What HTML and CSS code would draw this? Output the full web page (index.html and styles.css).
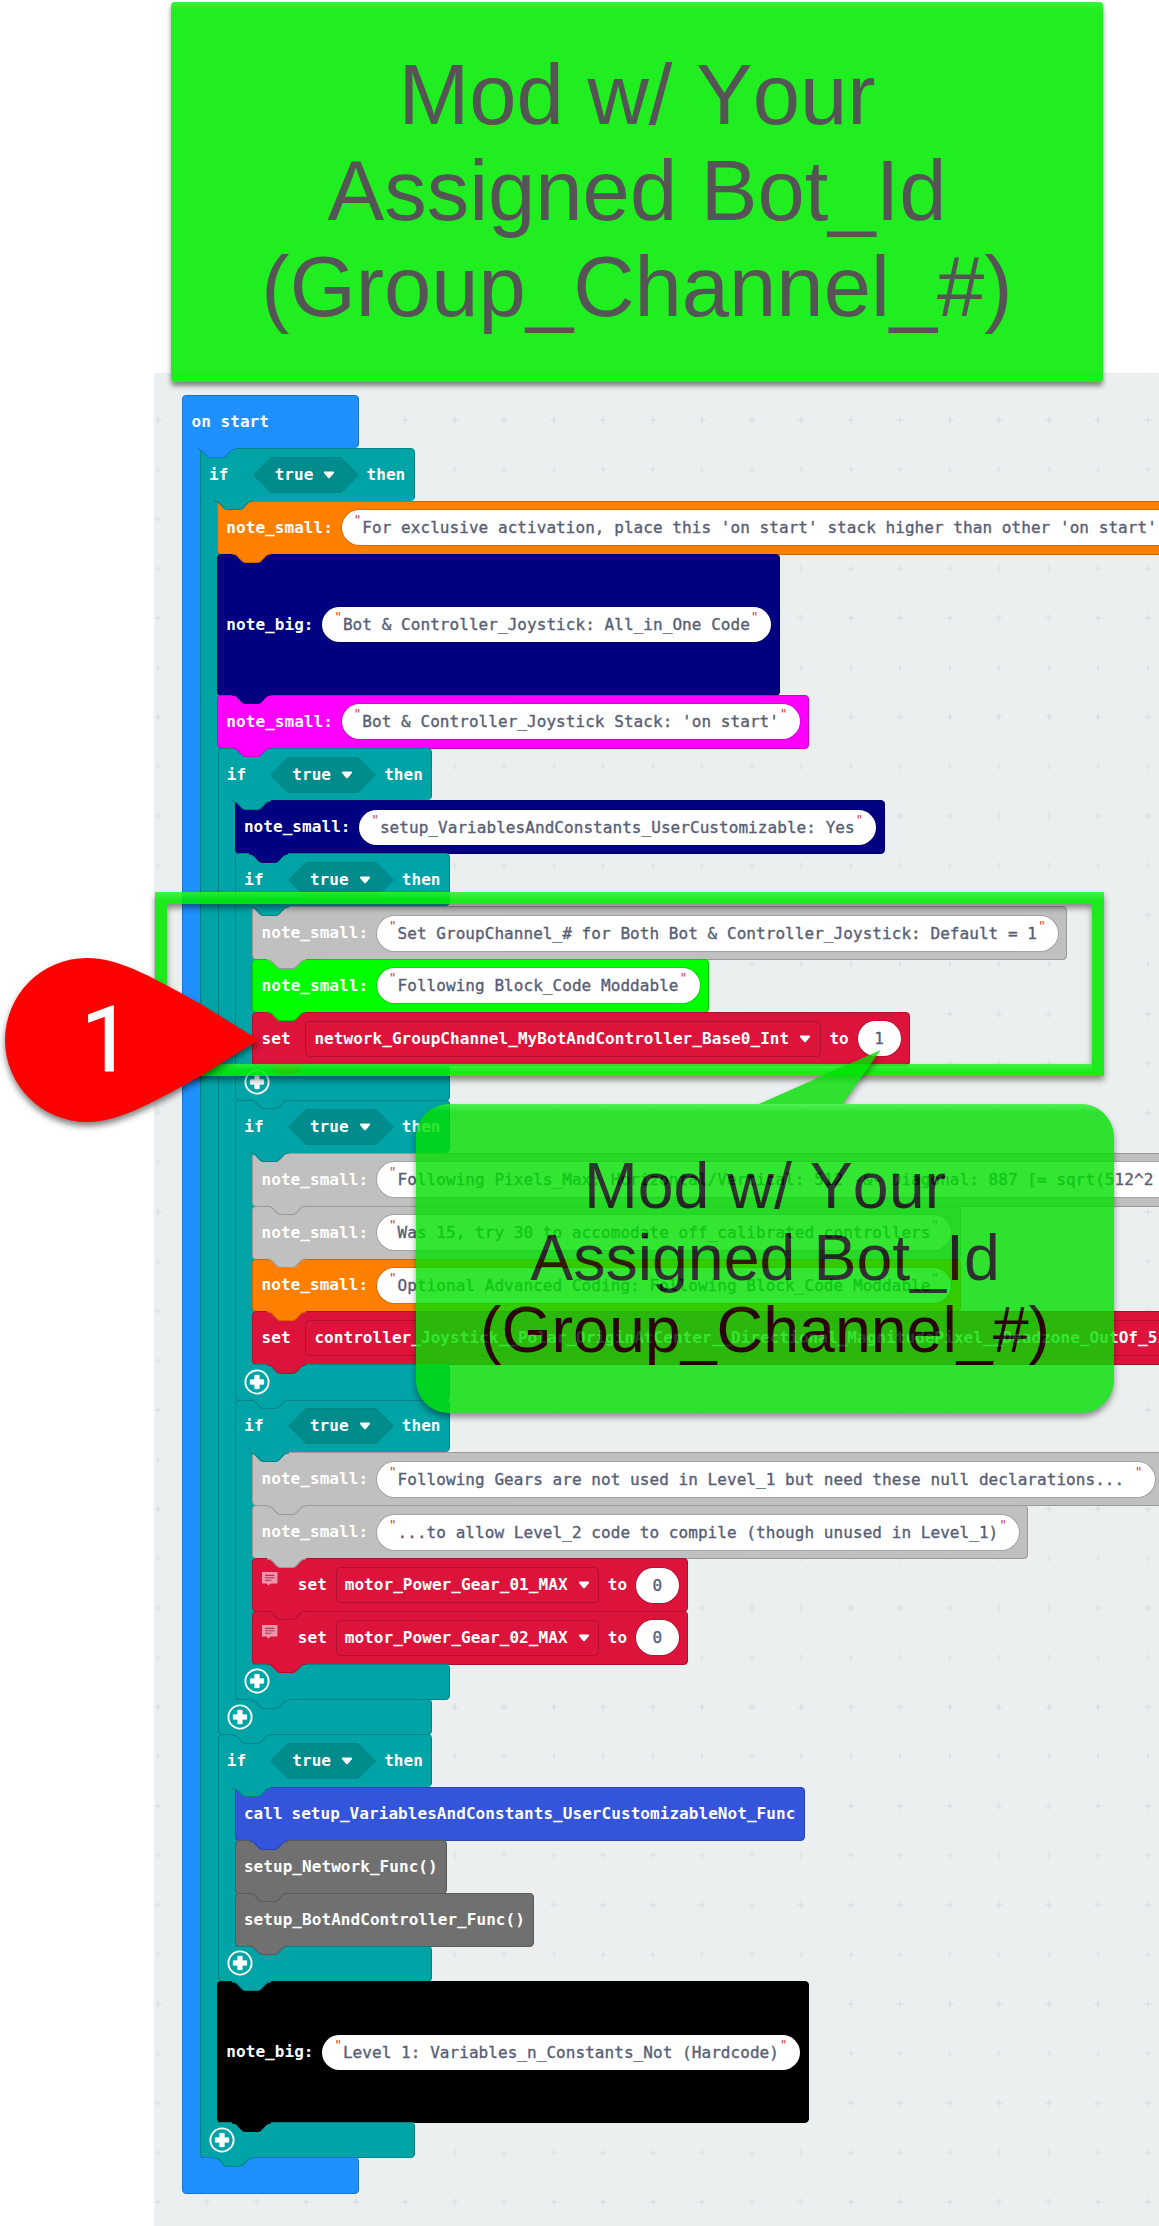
FILE: index.html
```html
<!DOCTYPE html>
<html lang="en">
<head>
<meta charset="utf-8">
<title>Mod w/ Your Assigned Bot_Id</title>
<link rel="stylesheet" href="styles.css">
</head>
<body>
<svg class="defs" width="0" height="0" aria-hidden="true">
  <symbol id="tab" viewBox="0 0 40 11"><path class="tab-fill" d="M0 0V1C3 1 4 1.6 5.2 2.8L9.4 7.4C10.4 8.6 11.4 9.5 13.6 9.5H25.4C27.6 9.5 28.6 8.6 29.6 7.4L33.8 2.8C35 1.6 36 1 39 1V0Z"/><path class="tab-line" d="M0 1C3 1 4 1.6 5.2 2.8L9.4 7.4C10.4 8.6 11.4 9.5 13.6 9.5H25.4C27.6 9.5 28.6 8.6 29.6 7.4L33.8 2.8C35 1.6 36 1 39 1"/></symbol>
  <symbol id="caret" viewBox="0 0 12 8"><path d="M1.6 .6H10.4Q11.6 .8 11 2L7 6.8Q6 7.8 5 6.8L1 2Q.4 .8 1.6 .6Z" fill="#fff"/></symbol>
  <symbol id="hex" viewBox="0 0 106 36"><path class="hex-shape" d="M.6 18L18 .5H88L105.4 18L88 35.5H18Z"/></symbol>
  <symbol id="plus" viewBox="0 0 26 26"><circle cx="13" cy="13" r="11.6" fill="none" stroke="#fff" stroke-width="1.9"/><path d="M10.8 6.3H15.2V10.8H19.7V15.2H15.2V19.7H10.8V15.2H6.3V10.8H10.8Z" fill="#fff" stroke="#fff" stroke-width=".8" stroke-linejoin="round"/></symbol>
  <symbol id="comment" viewBox="0 0 16 15"><path d="M0 0H15.4V11.4H8.6L6.2 13.8L4.6 11.4H0Z" fill="#f094a9"/><path d="M3 3.4H12.4M3 5.8H12.4M3 8.2H9.4" stroke="#a8385a" stroke-width="1.1"/></symbol>
</svg>

<main class="workspace">
  <div class="cblock start">
    <div class="head">on start<svg class="tab"><use href="#tab"/></svg></div>
    <div class="body">
      <div class="cblock if">
        <div class="head"><span>if</span><span class="bool"><svg class="hex"><use href="#hex"/></svg><b>true</b><svg class="caret"><use href="#caret"/></svg></span><span>then</span><svg class="tab"><use href="#tab"/></svg></div>
        <div class="body">
          <div class="block orange"><span>note_small:</span><span class="str"><q></q>For exclusive activation, place this 'on start' stack higher than other 'on start'<q></q></span><svg class="tab"><use href="#tab"/></svg></div>
          <div class="block navy big"><span>note_big:</span><span class="str"><q></q>Bot &amp; Controller_Joystick: All_in_One Code<q></q></span><svg class="tab"><use href="#tab"/></svg></div>
          <div class="block magenta"><span>note_small:</span><span class="str"><q></q>Bot &amp; Controller_Joystick Stack: 'on start'<q></q></span><svg class="tab"><use href="#tab"/></svg></div>
          <div class="cblock if">
            <div class="head"><span>if</span><span class="bool"><svg class="hex"><use href="#hex"/></svg><b>true</b><svg class="caret"><use href="#caret"/></svg></span><span>then</span><svg class="tab"><use href="#tab"/></svg></div>
            <div class="body">
              <div class="block navy"><span>note_small:</span><span class="str"><q></q>setup_VariablesAndConstants_UserCustomizable: Yes<q></q></span><svg class="tab"><use href="#tab"/></svg></div>
              <div class="cblock if">
                <div class="head"><span>if</span><span class="bool"><svg class="hex"><use href="#hex"/></svg><b>true</b><svg class="caret"><use href="#caret"/></svg></span><span>then</span><svg class="tab"><use href="#tab"/></svg></div>
                <div class="body">
                  <div class="block silver"><span>note_small:</span><span class="str"><q></q>Set GroupChannel_# for Both Bot &amp; Controller_Joystick: Default = 1<q></q></span><svg class="tab"><use href="#tab"/></svg></div>
                  <div class="block lime"><span>note_small:</span><span class="str"><q></q>Following Block_Code Moddable<q></q></span><svg class="tab"><use href="#tab"/></svg></div>
                  <div class="block crimson"><span class="set">set</span><span class="var">network_GroupChannel_MyBotAndController_Base0_Int<svg class="caret"><use href="#caret"/></svg></span><span>to</span><span class="num">1</span><svg class="tab"><use href="#tab"/></svg></div>
                </div>
                <div class="foot"><svg class="plus"><use href="#plus"/></svg><svg class="tab"><use href="#tab"/></svg></div>
              </div>
              <div class="cblock if">
                <div class="head"><span>if</span><span class="bool"><svg class="hex"><use href="#hex"/></svg><b>true</b><svg class="caret"><use href="#caret"/></svg></span><span>then</span><svg class="tab"><use href="#tab"/></svg></div>
                <div class="body">
                  <div class="block silver"><span>note_small:</span><span class="str"><q></q>Following Pixels_Max: Horizontal/Vertical: 512 -&amp;- Diagonal: 887 [= sqrt(512^2 <q></q></span><svg class="tab"><use href="#tab"/></svg></div>
                  <div class="block silver"><span>note_small:</span><span class="str"><q></q>Was 15, try 30 to accomodate off_calibrated controllers<q></q></span><svg class="tab"><use href="#tab"/></svg></div>
                  <div class="block orange"><span>note_small:</span><span class="str"><q></q>Optional Advanced Coding: Following Block_Code Moddable<q></q></span><svg class="tab"><use href="#tab"/></svg></div>
                  <div class="block crimson"><span class="set">set</span><span class="var">controller_Joystick__Polar_OriginAtCenter__Directional_MagnitudePixel__Deadzone_OutOf_512<svg class="caret"><use href="#caret"/></svg></span><svg class="tab"><use href="#tab"/></svg></div>
                </div>
                <div class="foot"><svg class="plus"><use href="#plus"/></svg><svg class="tab"><use href="#tab"/></svg></div>
              </div>
              <div class="cblock if">
                <div class="head"><span>if</span><span class="bool"><svg class="hex"><use href="#hex"/></svg><b>true</b><svg class="caret"><use href="#caret"/></svg></span><span>then</span><svg class="tab"><use href="#tab"/></svg></div>
                <div class="body">
                  <div class="block silver"><span>note_small:</span><span class="str"><q></q>Following Gears are not used in Level_1 but need these null declarations... <q></q></span><svg class="tab"><use href="#tab"/></svg></div>
                  <div class="block silver"><span>note_small:</span><span class="str"><q></q>...to allow Level_2 code to compile (though unused in Level_1)<q></q></span><svg class="tab"><use href="#tab"/></svg></div>
                  <div class="block crimson"><svg class="comment"><use href="#comment"/></svg><span>set</span><span class="var">motor_Power_Gear_01_MAX<svg class="caret"><use href="#caret"/></svg></span><span>to</span><span class="num">0</span><svg class="tab"><use href="#tab"/></svg></div>
                  <div class="block crimson"><svg class="comment"><use href="#comment"/></svg><span>set</span><span class="var">motor_Power_Gear_02_MAX<svg class="caret"><use href="#caret"/></svg></span><span>to</span><span class="num">0</span><svg class="tab"><use href="#tab"/></svg></div>
                </div>
                <div class="foot"><svg class="plus"><use href="#plus"/></svg><svg class="tab"><use href="#tab"/></svg></div>
              </div>
            </div>
            <div class="foot"><svg class="plus"><use href="#plus"/></svg><svg class="tab"><use href="#tab"/></svg></div>
          </div>
          <div class="cblock if">
            <div class="head"><span>if</span><span class="bool"><svg class="hex"><use href="#hex"/></svg><b>true</b><svg class="caret"><use href="#caret"/></svg></span><span>then</span><svg class="tab"><use href="#tab"/></svg></div>
            <div class="body">
              <div class="block royal"><span>call</span><span>setup_VariablesAndConstants_UserCustomizableNot_Func</span><svg class="tab"><use href="#tab"/></svg></div>
              <div class="block slate"><span>setup_Network_Func()</span><svg class="tab"><use href="#tab"/></svg></div>
              <div class="block slate"><span>setup_BotAndController_Func()</span><svg class="tab"><use href="#tab"/></svg></div>
            </div>
            <div class="foot"><svg class="plus"><use href="#plus"/></svg><svg class="tab"><use href="#tab"/></svg></div>
          </div>
          <div class="block black big"><span>note_big:</span><span class="str"><q></q>Level 1: Variables_n_Constants_Not (Hardcode)<q></q></span><svg class="tab"><use href="#tab"/></svg></div>
        </div>
        <div class="foot"><svg class="plus"><use href="#plus"/></svg><svg class="tab"><use href="#tab"/></svg></div>
      </div>
    </div>
    <div class="foot"></div>
  </div>
</main>

<h1 class="banner">Mod w/ Your<br>Assigned Bot_Id<br>(Group_Channel_#)</h1>

<svg class="frame" width="949" height="184" viewBox="0 0 949 184" aria-hidden="true">
  <defs><linearGradient id="shine" x1="0" y1="0" x2="0" y2="1"><stop offset="0" stop-color="#4f4" stop-opacity=".6"/><stop offset="1" stop-color="#4f4" stop-opacity="0"/></linearGradient></defs>
  <path d="M0 0H949V184H0ZM12 12V172H937V12Z" fill="#00eb00" fill-rule="evenodd"/>
  <path d="M0 0H949V8H0Z" fill="url(#shine)"/>
  <path d="M12 172H937V179H12Z" fill="url(#shine)"/>
</svg>

<div class="bubble">
  <svg width="698" height="363" viewBox="0 0 698 363" aria-hidden="true">
    <path d="M33 54H343L464.7 0L426.7 54H665C683 54 698 69 698 87V330C698 348 683 363 665 363H33C15 363 0 348 0 330V87C0 69 15 54 33 54Z" fill="#00e000"/>
    <path d="M33 54H665Q676 54 684 62H14Q22 54 33 54Z" fill="url(#shine)"/>
  </svg>
  <p>Mod w/ Your<br>Assigned Bot_Id<br>(Group_Channel_#)</p>
</div>

<div class="pin">
  <svg width="256" height="164" viewBox="0 0 256 164" aria-hidden="true"><path d="M83 0C118 0 156 24 196 45.5L254.5 82L196 118.5C156 140 118 164 83 164A82 82 0 0 1 83 0Z" fill="#f00"/></svg>
  <span>1</span>
</div>
</body>
</html>
```
FILE: styles.css
```css
* { box-sizing: border-box; }
body {
  margin: 0;
  position: relative;
  width: 1159px;
  height: 2226px;
  overflow: hidden;
  background: #fff;
  display: flow-root;
}
.defs { position: absolute; }

/* workspace */
.workspace {
  margin: 373px 0 0 154px;
  height: 1853px;
  padding: 22px 0 0 28.3px;
  overflow: hidden;
  background: #ebeff0 url("data:image/svg+xml,%3Csvg xmlns='http://www.w3.org/2000/svg' width='49.5' height='49.5'%3E%3Cpath d='M21.2 24.75h7M24.75 21.2v7' stroke='%23d9dcde' stroke-width='1'/%3E%3C/svg%3E") -21px 22.25px / 49.5px 49.5px;
  font: bold 16px/20px "DejaVu Sans Mono", monospace;
  letter-spacing: .057px;
  color: #fff;
  white-space: nowrap;
}

/* blocks */
.block, .head, .foot {
  position: relative;
  display: flex;
  align-items: center;
  gap: 8.8px;
  height: 52.87px;
  padding: 0 8.2px;
  background: var(--c);
  border: 1px solid var(--d);
  border-bottom: 0;
}
.block { width: max-content; margin-left: -.4px; border-radius: 4.4px; box-shadow: 0 1px 0 var(--d); }
.block.big { height: 141px; }
.start { --c: #1e90ff; --d: #1873cc; --w: 176.4px; }
.if { --c: #00a4a6; --d: #008385; --w: 214.6px; }
.orange { --c: #ff8000; --d: #cc6600; }
.navy { --c: #000080; --d: #000066; }
.magenta { --c: #ff00ff; --d: #cc00cc; }
.silver { --c: #c0c0c0; --d: #9a9a9a; }
.lime { --c: #00ff00; --d: #00cc00; }
.crimson { --c: #dc143c; --d: #b01030; }
.royal { --c: #3455db; --d: #2a44af; }
.slate { --c: #707070; --d: #5a5a5a; }
.black { --c: #000; --d: #000; }

.head { width: var(--w); border-radius: 4.4px 4.4px 4.4px 0; }
.start > .head { height: 53px; }
.body {
  padding-left: 17.62px;
  background:
    linear-gradient(var(--d), var(--d)) 0 0 / 1px 100% no-repeat,
    linear-gradient(var(--c), var(--c)) 0 0 / 21px 100% no-repeat;
}
.foot {
  width: var(--w);
  height: 35.25px;
  border-top: 0;
  border-radius: 0 4.4px 4.4px 4.4px;
  box-shadow: 0 1px 0 var(--d);
}
.foot::before {
  content: "";
  position: absolute;
  inset: 0 0 auto 17px;
  height: 1px;
  background: var(--d);
}

.tab {
  position: absolute;
  z-index: 1;
  top: calc(100% - .5px);
  left: 13.5px;
  width: 40px;
  height: 11px;
}
.tab-fill { fill: var(--c); }
.tab-line { fill: none; stroke: var(--d); stroke-width: 1.1; }
.caret { width: 12px; height: 8px; flex: none; }
.plus { width: 26px; height: 26px; }
.comment { width: 16px; height: 15px; margin: -11px 11px 0 .5px; }

/* block fields */
.bool {
  position: relative;
  display: flex;
  align-items: center;
  gap: 10px;
  width: 106px;
  height: 36px;
  padding-left: 22px;
  margin-left: 15.4px;
}
.bool b, .bool .caret { position: relative; }
.hex { position: absolute; inset: 0; width: 106px; height: 36px; }
.hex-shape { fill: #008b8c; stroke: #008385; }
.str, .num {
  height: 35px;
  border-radius: 18px;
  background: #fff;
  box-shadow: 0 0 0 .8px var(--d);
  color: #575e75;
  font-weight: normal;
  line-height: 35px;
  -webkit-text-stroke: .35px #575e75;
}
.str { display: flex; padding: 0 11.4px 0 11px; white-space: pre; }
.num { width: 43px; text-align: center; }
q { width: 9.6px; text-align: center; quotes: none; }
q::before {
  content: '"';
  display: block;
  font-size: 13px;
  line-height: 19px;
  color: #c44;
  -webkit-text-stroke: 0;
}
q::after { content: none; }
.set { margin-right: 6px; }
.var {
  display: flex;
  align-items: center;
  gap: 10px;
  height: 36px;
  padding: 0 8.4px 0 8px;
  border: 1px solid var(--d);
  border-radius: 4.4px;
}

/* annotations */
.banner {
  position: absolute;
  z-index: 5;
  left: 171px;
  top: 2px;
  width: 932px;
  height: 380px;
  margin: 0;
  padding-top: 45px;
  border-radius: 4px;
  background: rgba(0, 235, 0, .87);
  box-shadow: 0 4px 5px rgba(0, 0, 0, .45), inset 0 7px 6px -4px rgba(80, 255, 80, .6);
  font: 85px/96px "Liberation Sans", Arial, sans-serif;
  font-kerning: none;
  text-align: center;
  color: #555;
}
.frame {
  position: absolute;
  z-index: 5;
  left: 155px;
  top: 892px;
  overflow: visible;
  opacity: .87;
  filter: drop-shadow(0 4px 3px rgba(0, 0, 0, .5));
}
.bubble {
  position: absolute;
  z-index: 6;
  left: 416px;
  top: 1050px;
  width: 698px;
  height: 363px;
  opacity: .8;
}
.bubble svg { display: block; overflow: visible; filter: drop-shadow(0 4px 3px rgba(0, 0, 0, .5)); }
.bubble p {
  position: absolute;
  inset: 100px 0 auto;
  margin: 0;
  font: 64.5px/72px "Liberation Sans", Arial, sans-serif;
  font-kerning: none;
  text-align: center;
  color: #000;
}
.pin {
  position: absolute;
  z-index: 7;
  left: 4px;
  top: 958px;
}
.pin svg { display: block; overflow: visible; filter: drop-shadow(0 4px 3px rgba(0, 0, 0, .5)); }
.pin span {
  position: absolute;
  left: 77px;
  top: 30px;
  font: 91px/104px Roboto, Arial, sans-serif;
  -webkit-text-stroke: .8px #fff;
  color: #fff;
}
```
